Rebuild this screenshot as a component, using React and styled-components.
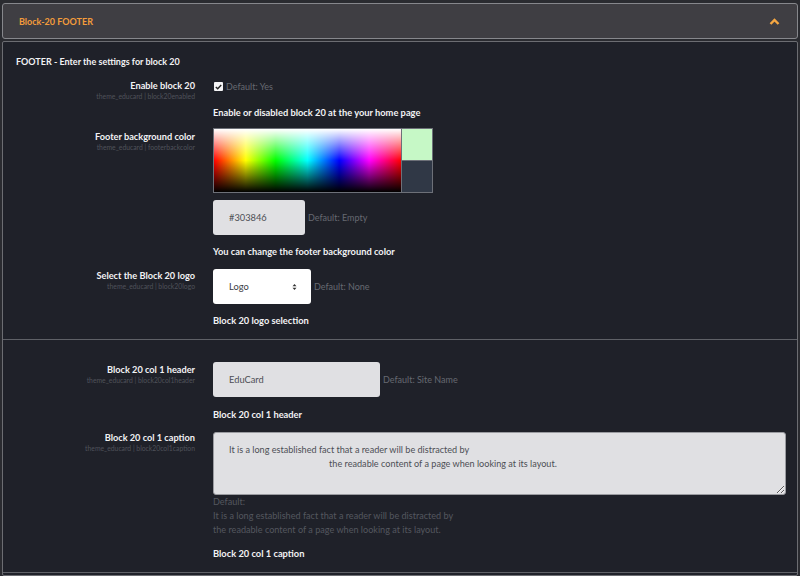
import styled, { createGlobalStyle } from 'styled-components'

const Global = createGlobalStyle`
    html, body {
        margin: 0;
        background: #2a2b30;
        font-family: Lato, "Noto Sans", sans-serif;
    }
    * { box-sizing: border-box; }
`

const Page = styled.div`
    width: 800px;
    height: 576px;
    padding: 3px 2px 0 2px;
    display: flex;
    flex-direction: column;
    gap: 2px;
    overflow: hidden;
`

const Header = styled.div`
    height: 36px;
    flex: none;
    display: flex;
    align-items: center;
    justify-content: space-between;
    padding: 0 17px 0 16px;
    background: #3f3e43;
    border: 1px solid #86878c;
    border-radius: 3px;
    color: #f39c3b;
    font-size: 9px;
    font-weight: 700;
`

const Panel = styled.div`
    flex: 1;
    background: #1f2129;
    border: 1px solid #6c6d72;
    border-radius: 2px;
    color: #f2f2f4;
`

const Section = styled.div`
    padding: ${p => p.$top}px 0 ${p => p.$bottom}px;
    border-bottom: 1px solid #5f6167;
`

const Title = styled.div`
    padding-left: 13px;
    font-size: 9px;
    font-weight: 700;
    line-height: 12px;
    margin-bottom: 9px;
`

const Row = styled.div`
    display: grid;
    grid-template-columns: 192px 1fr;
    column-gap: 18px;
    margin-bottom: ${p => p.$mb ?? 12}px;
`

const Label = styled.div`
    text-align: right;
    margin-top: ${p => p.$pt ?? 0}px;
`

const LabelName = styled.div`
    font-size: 9.2px;
    font-weight: 700;
    line-height: 13px;
`

const LabelKey = styled.div`
    font-size: 6.8px;
    line-height: 9px;
    color: #4f525a;
    white-space: nowrap;
`

const Control = styled.div`
    display: flex;
    flex-direction: column;
    align-items: flex-start;
`

const Line = styled.div`
    display: flex;
    align-items: center;
    gap: 3px;
    width: 100%;
    margin-top: ${p => p.$mt ?? 0}px;
`

const Muted = styled.span`
    font-size: 9px;
    color: #666971;
`

const Desc = styled.div`
    font-size: 9.3px;
    font-weight: 700;
    line-height: 13px;
    margin-top: ${p => p.$mt ?? 10}px;
`

const Check = styled.span`
    width: 9px;
    height: 9px;
    background: #f4f4f6;
    border-radius: 1px;
    display: inline-flex;
    align-items: center;
    justify-content: center;
    margin-left: 1px;
`

const Picker = styled.div`
    width: 220px;
    height: 65px;
    display: flex;
    border: 1px solid #6d7078;
`

const Spectrum = styled.div`
    flex: 1;
    background:
        linear-gradient(to bottom, #fff 0%, rgba(255,255,255,0) 50%, rgba(0,0,0,0) 50%, #000 100%),
        linear-gradient(to right, #f00, #ff0 17%, #0f0 33%, #0ff 50%, #00f 67%, #f0f 83%, #f00);
`

const Swatches = styled.div`
    width: 31px;
    display: flex;
    flex-direction: column;
    border-left: 1px solid #6d7078;
`

const Swatch = styled.div`
    flex: 1;
    background: ${p => p.$c};
    & + & { border-top: 1px solid #6d7078; }
`

const Input = styled.div`
    width: ${p => p.$w}px;
    height: 35px;
    padding-left: 16px;
    display: flex;
    align-items: center;
    background: ${p => p.$white ? '#ffffff' : '#e0e0e3'};
    border-radius: 3px;
    color: #4d4f55;
    font-size: 9.3px;
`

const SelectBox = styled(Input)`
    justify-content: space-between;
    padding-right: 14px;
    color: #3a3c42;
`

const Area = styled.textarea`
    width: 573px;
    height: 63px;
    padding: 10px 15px;
    background: #e0e0e3;
    border: 1px solid #9a9ba0;
    border-radius: 3px;
    color: #4d4f55;
    font-family: Lato, "Noto Sans", sans-serif;
    font-size: 9.1px;
    line-height: 14px;
    resize: vertical;
    outline: none;
`

const DefaultBlock = styled.div`
    margin-top: 0;
    font-size: 9.1px;
    line-height: 14px;
    color: #54575f;
`

const caption = 'It is a long established fact that a reader will be distracted by\n' +
    ' '.repeat(43) + 'the readable content of a page when looking at its layout.'

export default function App() {
    return (
        <Page>
            <Global />
            <Header>
                <span>Block-20 FOOTER</span>
                <svg width="11" height="7" viewBox="0 0 11 7">
                    <polyline points="1.5,6 5.5,2 9.5,6" fill="none" stroke="#f5a742" strokeWidth="2.4" />
                </svg>
            </Header>
            <Panel>
                <Section $top={14} $bottom={12}>
                    <Title>FOOTER - Enter the settings for block 20</Title>
                    <Row $mb={9}>
                        <Label $pt={2}>
                            <LabelName>Enable block 20</LabelName>
                            <LabelKey>theme_educard | block20enabled</LabelKey>
                        </Label>
                        <Control>
                            <Line $mt={4}>
                                <Check>
                                    <svg width="7" height="6" viewBox="0 0 7 6">
                                        <polyline points="0.8,3 2.7,4.8 6.2,1" fill="none" stroke="#222" strokeWidth="1.4" />
                                    </svg>
                                </Check>
                                <Muted>Default: Yes</Muted>
                            </Line>
                            <Desc $mt={14}>Enable or disabled block 20 at the your home page</Desc>
                        </Control>
                    </Row>
                    <Row $mb={11}>
                        <Label $pt={2}>
                            <LabelName>Footer background color</LabelName>
                            <LabelKey>theme_educard | footerbackcolor</LabelKey>
                        </Label>
                        <Control>
                            <Picker>
                                <Spectrum />
                                <Swatches>
                                    <Swatch $c="#c6f8c6" />
                                    <Swatch $c="#303846" />
                                </Swatches>
                            </Picker>
                            <Line $mt={7}>
                                <Input $w={92}>#303846</Input>
                                <Muted>Default: Empty</Muted>
                            </Line>
                            <Desc $mt={10}>You can change the footer background color</Desc>
                        </Control>
                    </Row>
                    <Row $mb={0}>
                        <Label $pt={0}>
                            <LabelName>Select the Block 20 logo</LabelName>
                            <LabelKey>theme_educard | block20logo</LabelKey>
                        </Label>
                        <Control>
                            <Line>
                                <SelectBox $w={98} $white>
                                    <span>Logo</span>
                                    <svg width="5" height="8" viewBox="0 0 5 8">
                                        <polygon points="0.5,3.2 2.5,1 4.5,3.2" fill="#333" />
                                        <polygon points="0.5,4.8 2.5,7 4.5,4.8" fill="#333" />
                                    </svg>
                                </SelectBox>
                                <Muted>Default: None</Muted>
                            </Line>
                            <Desc $mt={10}>Block 20 logo selection</Desc>
                        </Control>
                    </Row>
                </Section>
                <Section $top={22} $bottom={12}>
                    <Row $mb={11}>
                        <Label $pt={1}>
                            <LabelName>Block 20 col 1 header</LabelName>
                            <LabelKey>theme_educard | block20col1header</LabelKey>
                        </Label>
                        <Control>
                            <Line>
                                <Input $w={167}>EduCard</Input>
                                <Muted>Default: Site Name</Muted>
                            </Line>
                            <Desc $mt={11}>Block 20 col 1 header</Desc>
                        </Control>
                    </Row>
                    <Row $mb={0}>
                        <Label $pt={-1}>
                            <LabelName>Block 20 col 1 caption</LabelName>
                            <LabelKey>theme_educard | block20col1caption</LabelKey>
                        </Label>
                        <Control>
                            <Area defaultValue={caption} />
                            <DefaultBlock>
                                Default:<br />
                                It is a long established fact that a reader will be distracted by<br />
                                the readable content of a page when looking at its layout.
                            </DefaultBlock>
                            <Desc $mt={10}>Block 20 col 1 caption</Desc>
                        </Control>
                    </Row>
                </Section>
            </Panel>
        </Page>
    )
}
